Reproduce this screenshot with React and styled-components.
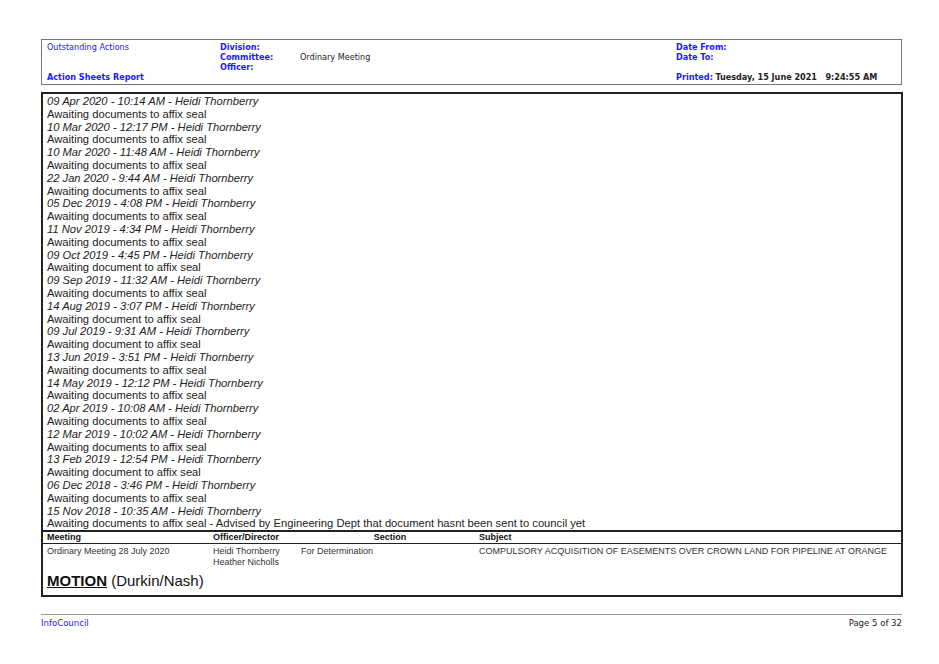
import React from 'react';
import styled, { createGlobalStyle } from 'styled-components';

const Global = createGlobalStyle`
  body { margin: 0; background: #fff; font-family: "Liberation Sans", Arial, sans-serif; }
`;

const Page = styled.div`
  width: 939px;
  height: 664px;
  padding: 39px 37px 0 41px;
  box-sizing: border-box;
`;

const Header = styled.div`
  height: 46px;
  border: 1px solid #777;
  display: grid;
  grid-template-columns: 173px 80px 376px 1fr;
  padding: 2px 5px 0 5px;
  box-sizing: border-box;
  font-family: "DejaVu Sans Condensed", "DejaVu Sans", sans-serif;
  font-size: 9px;
  line-height: 10px;
`;

const Col = styled.div`
  display: flex;
  flex-direction: column;
  justify-content: ${p => (p.$split ? 'space-between' : 'flex-start')};
  padding-bottom: 2px;
`;

const Blue = styled.span`
  color: #1a1aff;
  font-weight: ${p => (p.$bold ? 'bold' : 'normal')};
`;

const Dark = styled.span`
  color: #222;
  font-weight: ${p => (p.$bold ? 'bold' : 'normal')};
`;

const Stack = styled.div`
  display: flex;
  flex-direction: column;
`;

const Body = styled.div`
  margin-top: 7px;
  height: 505px;
  width: 862px;
  border: 2px solid #222;
  box-sizing: border-box;
  padding: 1px 4px 0 4px;
  display: flex;
  flex-direction: column;
`;

const Line = styled.div`
  font-size: 11.2px;
  line-height: 12.8px;
  color: #222;
  font-style: ${p => (p.$italic ? 'italic' : 'normal')};
  white-space: nowrap;
`;

const Grid = styled.div`
  display: grid;
  grid-template-columns: 166px 88px 178px 1fr;
  font-size: 9px;
  line-height: 11px;
  color: #333;
`;

const Th = styled.div`
  font-weight: bold;
  color: #111;
  border-top: 2px solid #222;
  border-bottom: 1px solid #222;
  margin: 0 -4px;
  padding: 0 4px;
  text-align: ${p => (p.$center ? 'center' : 'left')};
`;

const Td = styled.div`
  padding-top: 2px;
`;

const Motion = styled.div`
  margin-top: 4px;
  font-size: 15px;
  color: #111;
  b { text-decoration: underline; }
`;

const Footer = styled.div`
  margin-top: 17px;
  border-top: 1px solid #999;
  display: flex;
  justify-content: space-between;
  padding-top: 2px;
  font-family: "DejaVu Sans Condensed", "DejaVu Sans", sans-serif;
  font-size: 9.5px;
`;

const entries = [
  ['09 Apr 2020 - 10:14 AM', 'Awaiting documents to affix seal'],
  ['10 Mar 2020 - 12:17 PM', 'Awaiting documents to affix seal'],
  ['10 Mar 2020 - 11:48 AM', 'Awaiting documents to affix seal'],
  ['22 Jan 2020 - 9:44 AM', 'Awaiting documents to affix seal'],
  ['05 Dec 2019 - 4:08 PM', 'Awaiting documents to affix seal'],
  ['11 Nov 2019 - 4:34 PM', 'Awaiting documents to affix seal'],
  ['09 Oct 2019 - 4:45 PM', 'Awaiting document to affix seal'],
  ['09 Sep 2019 - 11:32 AM', 'Awaiting documents to affix seal'],
  ['14 Aug 2019 - 3:07 PM', 'Awaiting document to affix seal'],
  ['09 Jul 2019 - 9:31 AM', 'Awaiting document to affix seal'],
  ['13 Jun 2019 - 3:51 PM', 'Awaiting documents to affix seal'],
  ['14 May 2019 - 12:12 PM', 'Awaiting documents to affix seal'],
  ['02 Apr 2019 - 10:08 AM', 'Awaiting documents to affix seal'],
  ['12 Mar 2019 - 10:02 AM', 'Awaiting documents to affix seal'],
  ['13 Feb 2019 - 12:54 PM', 'Awaiting document to affix seal'],
  ['06 Dec 2018 - 3:46 PM', 'Awaiting documents to affix seal'],
  ['15 Nov 2018 - 10:35 AM', 'Awaiting documents to affix seal - Advised by Engineering Dept that document hasnt been sent to council yet'],
];

export default function App() {
  return (
    <Page>
      <Global />
      <Header>
        <Col $split>
          <Blue>Outstanding Actions</Blue>
          <Blue $bold>Action Sheets Report</Blue>
        </Col>
        <Col>
          <Blue $bold>Division:</Blue>
          <Blue $bold>Committee:</Blue>
          <Blue $bold>Officer:</Blue>
        </Col>
        <Col>
          <span>&nbsp;</span>
          <Dark>Ordinary Meeting</Dark>
        </Col>
        <Col $split>
          <Stack>
            <Blue $bold>Date From:</Blue>
            <Blue $bold>Date To:</Blue>
          </Stack>
          <div><Blue $bold>Printed:</Blue> <Dark $bold>Tuesday, 15 June 2021&nbsp;&nbsp; 9:24:55 AM</Dark></div>
        </Col>
      </Header>
      <Body>
        {entries.map(([d, t]) => (
          <React.Fragment key={d}>
            <Line $italic>{d} - Heidi Thornberry</Line>
            <Line>{t}</Line>
          </React.Fragment>
        ))}
        <Grid>
          <Th>Meeting</Th>
          <Th>Officer/Director</Th>
          <Th $center>Section</Th>
          <Th>Subject</Th>
          <Td>Ordinary Meeting 28 July 2020</Td>
          <Td>Heidi Thornberry<br />Heather Nicholls</Td>
          <Td>For Determination</Td>
          <Td>COMPULSORY ACQUISITION OF EASEMENTS OVER CROWN LAND FOR PIPELINE AT ORANGE</Td>
        </Grid>
        <Motion><b>MOTION</b> (Durkin/Nash)</Motion>
      </Body>
      <Footer>
        <Blue>InfoCouncil</Blue>
        <Dark>Page 5 of 32</Dark>
      </Footer>
    </Page>
  );
}
